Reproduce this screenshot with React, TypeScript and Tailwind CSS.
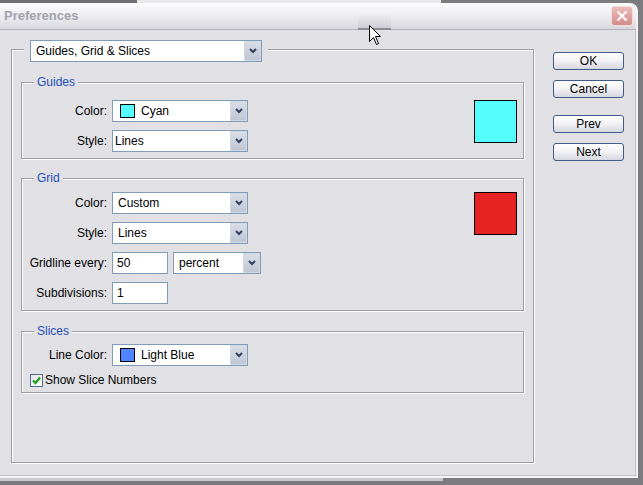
import type { ReactNode } from 'react';

function Chevron() {
  return (
    <svg width="8" height="6" viewBox="0 0 8 6">
      <polyline points="1,1 4,4 7,1" fill="none" stroke="#34425f" strokeWidth="2" />
    </svg>
  );
}

function Select({ className, pad, children }: { className: string; pad: string; children: ReactNode }) {
  return (
    <div className={`flex h-[22px] items-stretch border border-[#7f9db9] bg-white ${className}`}>
      <div className={`flex flex-1 items-center whitespace-nowrap ${pad}`}>{children}</div>
      <div className="flex w-[17px] items-center justify-center border border-[#d3d8e2] bg-linear-to-b from-[#d9dde6] to-[#bfc6d3]">
        <Chevron />
      </div>
    </div>
  );
}

function Input({ value }: { value: string }) {
  return (
    <div className="flex h-[22px] w-[56px] items-center border border-[#7f9db9] bg-white pl-[4px]">{value}</div>
  );
}

function Swatch({ color }: { color: string }) {
  return <span className={`mr-[6px] ml-[7px] h-[14px] w-[15px] border border-black ${color}`} />;
}

function Row({ label, children }: { label: string; children: ReactNode }) {
  return (
    <div className="flex items-center gap-[5px]">
      <span className="w-[85px] text-right">{label}</span>
      {children}
    </div>
  );
}

function Group({ title, className, children }: { title: string; className: string; children: ReactNode }) {
  return (
    <div
      className={`mx-[9px] flex flex-col border border-[#9d9da3] shadow-[inset_1px_1px_0_#fff,1px_1px_0_#fff] ${className}`}
    >
      <span className="-mt-[9px] ml-[12px] w-fit bg-[#e1e0e5] px-[3px] leading-[16px] text-[#1f4fb8]">{title}</span>
      {children}
    </div>
  );
}

function Button({ label, className }: { label: string; className: string }) {
  return (
    <div
      className={`flex h-[18px] w-[71px] items-center justify-center rounded-[3px] border border-[#3f5b86] bg-linear-to-b from-white via-[#f2f2f5] to-[#d5d6df] ${className}`}
    >
      {label}
    </div>
  );
}

export default function App() {
  return (
    <div className="relative flex h-[485px] w-[643px] flex-col overflow-hidden bg-[#7c7c7e] font-['Liberation_Sans',Arial,sans-serif] text-[12px] text-black">
      <div className="flex h-[3px] shrink-0">
        <div className="w-[137px] bg-[#6f6f72]" />
        <div className="w-[304px] bg-[#e9e9ed]" />
        <div className="flex-1" />
      </div>

      <div className="flex h-[475px] w-[638px] shrink-0 flex-col rounded-tr-[8px] border-r-2 border-b-2 border-[#f4f4f6] bg-[#e1e0e5] shadow-[inset_-1px_-1px_0_#c0c0c5]">
        {/* title bar */}
        <div className="flex h-[27px] shrink-0 items-center rounded-tr-[8px] border-b border-[#b3b3bb] bg-linear-to-b from-[#fbfbfd] via-[#ededf1] to-[#d8d8de] pl-[4px]">
          <span className="text-[13px] font-bold text-[#a2a3ad]">Preferences</span>
          <div className="mr-[3px] ml-auto flex h-[20px] w-[22px] items-center justify-center rounded-[3px] border border-[#f3dede] bg-linear-to-b from-[#ecbcbc] to-[#d48c8c]">
            <svg width="12" height="12" viewBox="0 0 12 12">
              <path d="M1.5 1.5 L10.5 10.5 M10.5 1.5 L1.5 10.5" stroke="#fff" strokeWidth="2" />
            </svg>
          </div>
        </div>

        {/* body */}
        <div className="flex flex-1 pt-[19px] pl-[11px]">
          <div className="flex h-[414px] w-[523px] flex-col border border-[#9d9da3] shadow-[inset_1px_1px_0_#fff,1px_1px_0_#fff]">
            <div className="-mt-[10px] ml-[12px] w-fit bg-[#e1e0e5] px-[6px]">
              <Select className="w-[232px]" pad="pl-[5px]">
                Guides, Grid &amp; Slices
              </Select>
            </div>

            <Group title="Guides" className="mt-[20px] pb-[6px]">
              <div className="mt-[10px] flex justify-between">
                <div className="flex flex-col gap-[8px]">
                  <Row label="Color:">
                    <Select className="w-[136px]" pad="">
                      <Swatch color="bg-[#55ffff]" />
                      Cyan
                    </Select>
                  </Row>
                  <Row label="Style:">
                    <Select className="w-[136px]" pad="pl-[2px]">
                      Lines
                    </Select>
                  </Row>
                </div>
                <div className="mr-[6px] h-[43px] w-[43px] border border-black bg-[#55ffff]" />
              </div>
            </Group>

            <Group title="Grid" className="mt-[19px] pb-[6px]">
              <div className="mt-[6px] flex justify-between">
                <div className="flex flex-col gap-[8px]">
                  <Row label="Color:">
                    <Select className="w-[136px]" pad="pl-[5px]">
                      Custom
                    </Select>
                  </Row>
                  <Row label="Style:">
                    <Select className="w-[136px]" pad="pl-[5px]">
                      Lines
                    </Select>
                  </Row>
                  <Row label="Gridline every:">
                    <Input value="50" />
                    <Select className="w-[88px]" pad="pl-[5px]">
                      percent
                    </Select>
                  </Row>
                  <Row label="Subdivisions:">
                    <Input value="1" />
                  </Row>
                </div>
                <div className="mr-[6px] h-[43px] w-[43px] border border-black bg-[#e62222]" />
              </div>
            </Group>

            <Group title="Slices" className="mt-[20px] pb-[5px]">
              <div className="mt-[5px]">
                <Row label="Line Color:">
                  <Select className="w-[136px]" pad="">
                    <Swatch color="bg-[#4f86ff]" />
                    Light Blue
                  </Select>
                </Row>
              </div>
              <div className="mt-[8px] ml-[8px] flex items-center gap-[2px] leading-[13px]">
                <div className="flex h-[13px] w-[13px] items-center justify-center border border-[#55708f] bg-linear-to-br from-[#e4e4e8] to-white">
                  <svg width="11" height="11" viewBox="0 0 11 11">
                    <polyline points="2,5.5 4.5,8 9,2.5" fill="none" stroke="#21a121" strokeWidth="2.2" />
                  </svg>
                </div>
                <span>Show Slice Numbers</span>
              </div>
            </Group>
          </div>

          <div className="mt-[3px] ml-[19px] flex flex-col">
            <Button label="OK" className="" />
            <Button label="Cancel" className="mt-[10px]" />
            <Button label="Prev" className="mt-[17px]" />
            <Button label="Next" className="mt-[10px]" />
          </div>
        </div>
      </div>

      <div className="flex h-[3px] shrink-0">
        <div className="w-[443px] bg-[#c9c9cd]" />
      </div>

      {/* title bar grabber and mouse pointer */}
      <div className="absolute top-[14px] left-[358px] h-[16px] w-[33px] border-b-2 border-[#8c8c93] bg-linear-to-b from-[#eeeef2] to-[#cdcdd4]" />
      <svg className="absolute top-[25px] left-[369px]" width="13" height="21" viewBox="0 0 13 21">
        <path d="M0.5 0.5 L0.5 16.5 L4.5 12.5 L7.5 19.5 L9.5 18.5 L6.5 11.5 L11.5 11.5 Z" fill="#fff" stroke="#000" strokeWidth="1" />
      </svg>
    </div>
  );
}
